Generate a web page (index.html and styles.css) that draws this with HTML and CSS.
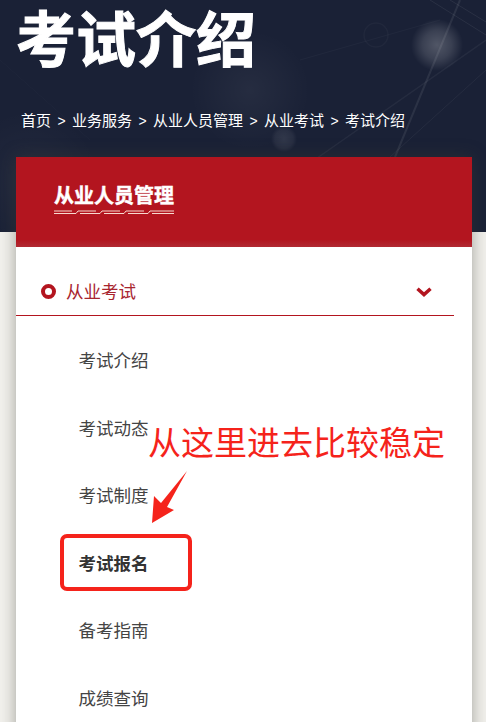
FILE: index.html
```html
<!DOCTYPE html>
<html lang="zh-CN">
<head>
<meta charset="utf-8">
<title>考试介绍</title>
<link rel="stylesheet" href="styles.css">
</head>
<body>
<div class="page">
  <header class="hero">
    <svg class="hero-lines" viewBox="0 0 486 232" width="486" height="232" aria-hidden="true">
      <g fill="none" stroke="#fff">
        <path d="M486 40 L300 170" stroke-opacity=".05" stroke-width="1.5"/>
        <path d="M460 0 L395 157" stroke-opacity=".08" stroke-width="2"/>
        <path d="M430 0 L486 35" stroke-opacity=".07"/>
        <path d="M450 0 L486 22" stroke-opacity=".07"/>
        <path d="M486 70 L390 157" stroke-opacity=".05"/>
        <path d="M300 60 L440 20" stroke-opacity=".03"/>
        <circle cx="376" cy="35" r="12" stroke-opacity=".03" stroke-width="1.5"/>
        <path d="M0 60 L90 140" stroke-opacity=".02"/>
      </g>
    </svg>
    <h1 class="hero-title">考试介绍</h1>
    <nav class="crumbs">
      <a>首页</a><span class="sep">&gt;</span><a>业务服务</a><span class="sep">&gt;</span><a>从业人员管理</a><span class="sep">&gt;</span><a>从业考试</a><span class="sep">&gt;</span><a>考试介绍</a>
    </nav>
  </header>

  <section class="card">
    <div class="card-head">
      <div class="card-title">
        <span class="card-title-text">从业人员管理</span>
        <svg class="card-title-rule" viewBox="0 0 120 5" width="120" height="5" aria-hidden="true">
          <path d="M0 1H18M0 3.500H22L24 1H42M26 3.500H46L48 1H66M50 3.500H70L72 1H90M74 3.500H94L96 1H120M98 3.500H120" fill="none" stroke="#f7d9cf" stroke-width="1"/>
        </svg>
      </div>
    </div>
    <div class="menu">
      <div class="menu-head">
        <span class="dot"></span>
        <span class="menu-head-text">从业考试</span>
        <svg class="chevron" viewBox="0 0 16 10" width="16" height="10" aria-hidden="true">
          <path d="M1.500 1.800L8 7.600L14.500 1.800" fill="none" stroke="#b3151f" stroke-width="3.500"/>
        </svg>
      </div>
      <ul class="menu-list">
        <li>考试介绍</li>
        <li>考试动态</li>
        <li>考试制度</li>
        <li class="active">考试报名</li>
        <li>备考指南</li>
        <li>成绩查询</li>
      </ul>
    </div>
  </section>

  <div class="note">从这里进去比较稳定</div>
  <svg class="arrow" viewBox="0 0 40 56" width="40" height="56" aria-hidden="true">
    <path d="M37 1 L17 37 L24 40 L2 53 L4 26 L11 33 Z" fill="#f5231b"/>
  </svg>
  <div class="highlight"></div>
</div>
</body>
</html>
```
FILE: styles.css
```css
* {
  box-sizing: border-box;
}

html,
body {
  margin: 0;
  padding: 0;
  height: 100%;
  overflow: hidden;
}

body {
  background: #f3f2ee;
  font-family: "Liberation Sans", "Noto Sans CJK SC", sans-serif;
}

.page {
  position: relative;
  width: 486px;
  height: 722px;
  overflow: hidden;
}

.hero {
  position: relative;
  height: 232px;
  padding: 6px 16px 0;
  overflow: hidden;
  background-color: #1a2136;
  background-image:
    radial-gradient(circle 26px at 437px 45px, rgba(255, 255, 255, .24), rgba(255, 255, 255, .14) 55%, rgba(255, 255, 255, 0)),
    radial-gradient(circle 13px at 284px 139px, rgba(255, 255, 255, .1), rgba(255, 255, 255, .06) 70%, rgba(255, 255, 255, 0)),
    radial-gradient(circle 60px at 250px 90px, rgba(255, 255, 255, .05), rgba(255, 255, 255, 0)),
    radial-gradient(circle 70px at 30px 180px, rgba(255, 255, 255, .04), rgba(255, 255, 255, 0));
}

.hero-lines {
  position: absolute;
  top: 0;
  left: 0;
}

.hero-title {
  position: relative;
  margin: 0;
  color: #fff;
  font-size: 60px;
  font-weight: 700;
  line-height: 72px;
  white-space: nowrap;
  -webkit-text-stroke: 1px #fff;
}

.crumbs {
  position: relative;
  display: flex;
  align-items: center;
  margin-top: 33px;
  padding-left: 5px;
  color: #fff;
  font-size: 15px;
  line-height: 20px;
  white-space: nowrap;
}

.sep {
  width: 21px;
  text-align: center;
  font-size: 14px;
}

.card {
  position: relative;
  height: 600px;
  margin: -75px 14px 0 16px;
  background: #fff;
  box-shadow: 0 0 16px rgba(60, 60, 50, .45);
}

.card-head {
  height: 90px;
  padding: 25px 38px 0;
  background: linear-gradient(#b3151f 0, #b3151f 92%, #b02a33 100%);
}

.card-title {
  display: flex;
  flex-direction: column;
  width: 120px;
}

.card-title-text {
  color: #fff;
  font-size: 20px;
  font-weight: 700;
  line-height: 28px;
  white-space: nowrap;
  -webkit-text-stroke: .4px #fff;
}

.card-title-rule {
  display: block;
}

.menu {
  padding-top: 23px;
}

.menu-head {
  display: flex;
  align-items: center;
  width: 438px;
  height: 46px;
  padding: 0 22px 2px 25px;
  border-bottom: 1px solid #b3151f;
}

.dot {
  flex: none;
  width: 15px;
  height: 15px;
  margin-right: 10px;
  border: 4.500px solid #b3151f;
  border-radius: 50%;
  background: #fff;
}

.menu-head-text {
  flex: 1;
  color: #a8252f;
  font-size: 17.500px;
  line-height: 26px;
}

.menu-list {
  margin: 0;
  padding: 12px 0 0 62.500px;
  list-style: none;
}

.menu-list li {
  height: 67.500px;
  color: #444;
  font-size: 17.500px;
  line-height: 67px;
}

.menu-list .active {
  color: #333;
  font-weight: 700;
}

.note {
  position: absolute;
  top: 424px;
  left: 148px;
  color: #f5231b;
  font-size: 33px;
  line-height: 40px;
  white-space: nowrap;
}

.arrow {
  position: absolute;
  top: 470px;
  left: 150px;
}

.highlight {
  position: absolute;
  top: 534px;
  left: 60px;
  width: 132px;
  height: 57px;
  border: 4px solid #f5231b;
  border-radius: 7px;
}
```
